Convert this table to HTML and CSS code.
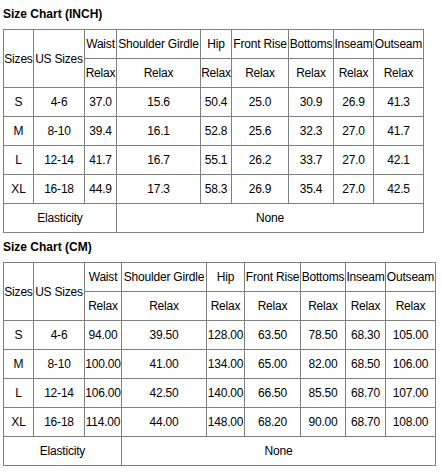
FILE: index.html
```html
<!DOCTYPE html>
<html lang="en">
<head>
    <meta charset="UTF-8">
    <meta name="viewport" content="width=device-width, initial-scale=1.0">
    <title>Size Chart</title>
    <link rel="stylesheet" href="styles.css">
</head>
<body>
    <!-- Inch chart -->
    <div class="chart-title">Size Chart (INCH)</div>
    <table class="size-table inch-table">
        <colgroup>
            <col class="c-size">
            <col class="c-us">
            <col class="c-waist">
            <col class="c-shoulder">
            <col class="c-hip">
            <col class="c-rise">
            <col class="c-bottoms">
            <col class="c-inseam">
            <col class="c-outseam">
        </colgroup>
        <tr>
            <td rowspan="2">Sizes</td>
            <td rowspan="2">US Sizes</td>
            <td>Waist</td>
            <td>Shoulder Girdle</td>
            <td>Hip</td>
            <td>Front Rise</td>
            <td>Bottoms</td>
            <td>Inseam</td>
            <td>Outseam</td>
        </tr>
        <tr>
            <td>Relax</td>
            <td>Relax</td>
            <td>Relax</td>
            <td>Relax</td>
            <td>Relax</td>
            <td>Relax</td>
            <td>Relax</td>
        </tr>
        <tr>
            <td>S</td><td>4-6</td><td>37.0</td><td>15.6</td><td>50.4</td><td>25.0</td><td>30.9</td><td>26.9</td><td>41.3</td>
        </tr>
        <tr>
            <td>M</td><td>8-10</td><td>39.4</td><td>16.1</td><td>52.8</td><td>25.6</td><td>32.3</td><td>27.0</td><td>41.7</td>
        </tr>
        <tr>
            <td>L</td><td>12-14</td><td>41.7</td><td>16.7</td><td>55.1</td><td>26.2</td><td>33.7</td><td>27.0</td><td>42.1</td>
        </tr>
        <tr>
            <td>XL</td><td>16-18</td><td>44.9</td><td>17.3</td><td>58.3</td><td>26.9</td><td>35.4</td><td>27.0</td><td>42.5</td>
        </tr>
        <tr>
            <td colspan="3">Elasticity</td>
            <td colspan="6">None</td>
        </tr>
    </table>

    <!-- CM chart -->
    <div class="chart-title">Size Chart (CM)</div>
    <table class="size-table cm-table">
        <colgroup>
            <col class="c-size">
            <col class="c-us">
            <col class="c-waist">
            <col class="c-shoulder">
            <col class="c-hip">
            <col class="c-rise">
            <col class="c-bottoms">
            <col class="c-inseam">
            <col class="c-outseam">
        </colgroup>
        <tr>
            <td rowspan="2">Sizes</td>
            <td rowspan="2">US Sizes</td>
            <td>Waist</td>
            <td>Shoulder Girdle</td>
            <td>Hip</td>
            <td>Front Rise</td>
            <td>Bottoms</td>
            <td>Inseam</td>
            <td>Outseam</td>
        </tr>
        <tr>
            <td>Relax</td>
            <td>Relax</td>
            <td>Relax</td>
            <td>Relax</td>
            <td>Relax</td>
            <td>Relax</td>
            <td>Relax</td>
        </tr>
        <tr>
            <td>S</td><td>4-6</td><td>94.00</td><td>39.50</td><td>128.00</td><td>63.50</td><td>78.50</td><td>68.30</td><td>105.00</td>
        </tr>
        <tr>
            <td>M</td><td>8-10</td><td>100.00</td><td>41.00</td><td>134.00</td><td>65.00</td><td>82.00</td><td>68.50</td><td>106.00</td>
        </tr>
        <tr>
            <td>L</td><td>12-14</td><td>106.00</td><td>42.50</td><td>140.00</td><td>66.50</td><td>85.50</td><td>68.70</td><td>107.00</td>
        </tr>
        <tr>
            <td>XL</td><td>16-18</td><td>114.00</td><td>44.00</td><td>148.00</td><td>68.20</td><td>90.00</td><td>68.70</td><td>108.00</td>
        </tr>
        <tr>
            <td colspan="3">Elasticity</td>
            <td colspan="6">None</td>
        </tr>
    </table>
</body>
</html>
```

FILE: styles.css
```css
body {
    font-family: 'Liberation Sans', Arial, sans-serif;
    font-size: 12px;
    color: #000;
    background-color: #fff;
    margin: 0;
    padding: 0 3px;
}

.chart-title {
    font-weight: bold;
    line-height: 14px;
    margin: 7px 0 8px;
}

.size-table {
    border-collapse: collapse;
    table-layout: fixed;
}

.size-table td {
    border: 1px solid #808080;
    padding: 0;
    height: 28px;
    text-align: center;
    vertical-align: middle;
    white-space: nowrap;
    letter-spacing: -0.2px;
}

/* column widths, border to border */
.inch-table { width: 420px; }
.cm-table { width: 432px; }

.c-size { width: 30px; }
.c-us { width: 51px; }
.c-bottoms { width: 45px; }
.c-inseam { width: 40px; }
.c-outseam { width: 50px; }

.inch-table .c-waist { width: 32px; }
.inch-table .c-shoulder { width: 84px; }
.inch-table .c-hip { width: 31px; }
.inch-table .c-rise { width: 57px; }

.cm-table .c-waist { width: 37px; }
.cm-table .c-shoulder { width: 85px; }
.cm-table .c-hip { width: 38px; }
.cm-table .c-rise { width: 56px; }
```
